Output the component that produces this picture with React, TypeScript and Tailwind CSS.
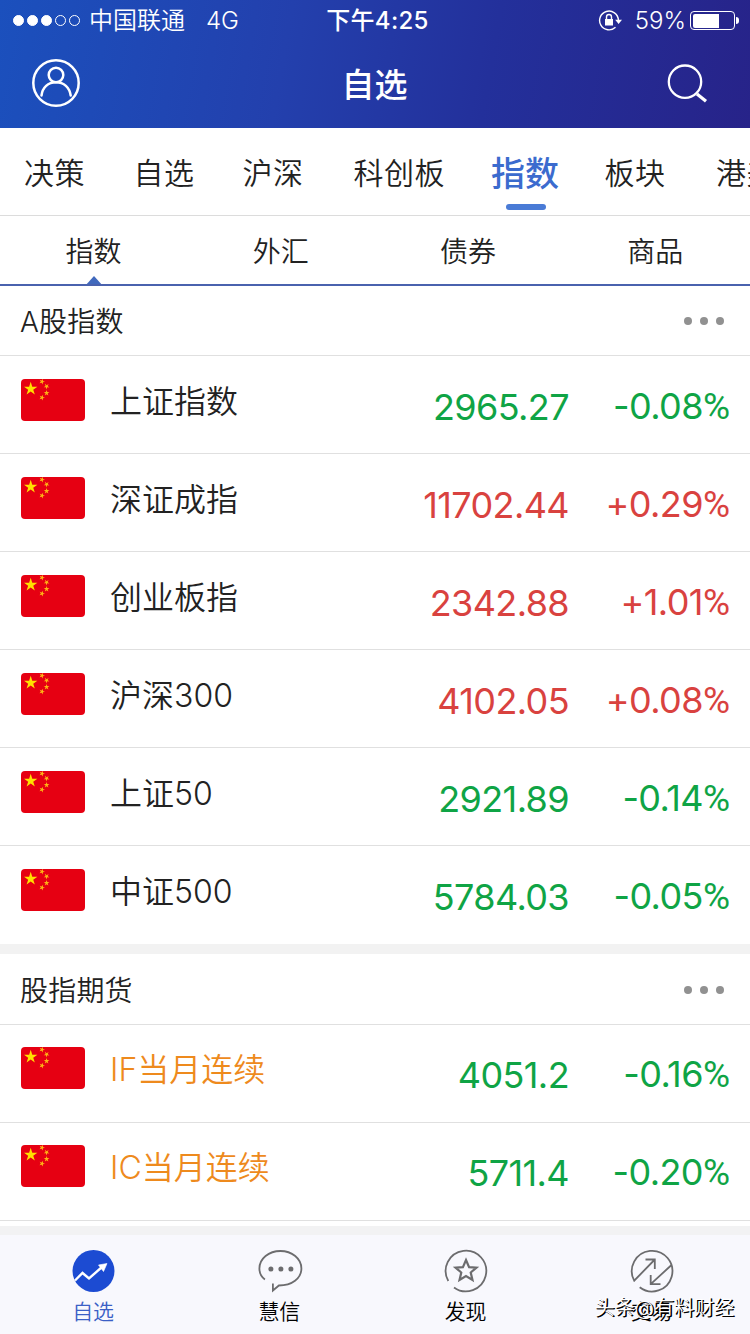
import React from "react";

type Quote = { name: string; price: string; change: string; accent?: boolean };

const aShares: Quote[] = [
  { name: "上证指数", price: "2965.27", change: "-0.08%" },
  { name: "深证成指", price: "11702.44", change: "+0.29%" },
  { name: "创业板指", price: "2342.88", change: "+1.01%" },
  { name: "沪深300", price: "4102.05", change: "+0.08%" },
  { name: "上证50", price: "2921.89", change: "-0.14%" },
  { name: "中证500", price: "5784.03", change: "-0.05%" },
];

const futures: Quote[] = [
  { name: "IF当月连续", price: "4051.2", change: "-0.16%", accent: true },
  { name: "IC当月连续", price: "5711.4", change: "-0.20%", accent: true },
];

const STAR = "M0-1 .2245-.309 .951-.309 .3633.118 .5878.809 0 .382-.5878.809-.3633.118-.951-.309-.2245-.309Z";

function Flag() {
  return (
    <svg className="h-[42px] w-16 shrink-0" viewBox="0 0 64 42">
      <rect width="64" height="42" rx="4" fill="#e60012" />
      <path d={STAR} transform="translate(9.7 9.8) scale(7)" fill="#ffe100" />
      <g fill="#fdb515">
        <path d={STAR} transform="translate(21 2.6) rotate(20) scale(3)" />
        <path d={STAR} transform="translate(25.6 7.4) rotate(40) scale(3)" />
        <path d={STAR} transform="translate(25.6 14) scale(3)" />
        <path d={STAR} transform="translate(21 18.6) rotate(20) scale(3)" />
      </g>
    </svg>
  );
}

function Row({ q }: { q: Quote }) {
  const tone = q.change.startsWith("+") ? "text-[#d9423f]" : "text-[#0fa445]";
  return (
    <div className={`flex h-[98px] items-start border-b border-[#e0e0e0] pl-[21px] pr-5 ${q.accent ? "[&>*]:-mt-px" : ""}`}>
      <div className="pt-[23px]">
        <Flag />
      </div>
      <div className={`flex-1 pl-[25px] pt-[22px] text-[32px] leading-[48px] ${q.accent ? "text-[#ee8a1d]" : "text-[#222]"}`}>
        {q.name}
      </div>
      <div className={`pt-[27px] text-right text-[36px] font-[370] leading-[48px] tracking-[-0.6px] ${tone}`}>{q.price}</div>
      <div className={`w-[161px] pt-[26px] text-right text-[36px] font-[370] leading-[48px] tracking-[-0.6px] ${tone}`}>
        {q.change.slice(0, -1)}
        <span className="font-['Roboto'] text-[37px] font-normal tracking-normal">%</span>
      </div>
    </div>
  );
}

function Section({ title, rows }: { title: string; rows: Quote[] }) {
  return (
    <section className="first:[&>div:last-child]:border-transparent">
      <div className="flex h-[70px] items-center justify-between border-b border-[#e0e0e0] pl-5 pr-[26px]">
        <h2 className="pt-0.5 text-[28px] leading-10 tracking-[0.2px] text-[#222]">{title}</h2>
        <div className="flex gap-2">
          <i className="size-2 rounded-full bg-[#919191]" />
          <i className="size-2 rounded-full bg-[#919191]" />
          <i className="size-2 rounded-full bg-[#919191]" />
        </div>
      </div>
      {rows.map((q) => (
        <Row key={q.name} q={q} />
      ))}
    </section>
  );
}

function TrendIcon() {
  return (
    <svg className="size-11" viewBox="0 0 44 44" fill="none">
      <circle cx="22.500" cy="22" r="21" fill="#1c4bd2" />
      <path d="M4 31.500 11.500 24 18 29.500 31 18" stroke="#fff" strokeWidth="2.400" />
      <path d="M36 14.500 27.500 16 32.500 22.500Z" fill="#fff" stroke="#fff" strokeWidth=".6" />
    </svg>
  );
}

function ChatIcon() {
  return (
    <svg className="size-11 overflow-visible" viewBox="0 0 44 44" fill="none">
      <g transform="translate(.9 0)">
        <path d="M7 30.500C3 27.500 1.500 23.500 1.500 19.500 1.500 9.500 11 2 22.500 2S43.500 9.500 43.500 19.500 34 36.500 21 36.500L15 41.500V34.500" stroke="#6c6c6e" strokeWidth="1.800" />
        <g fill="#6c6c6e">
          <circle cx="13" cy="20" r="2.500" />
          <circle cx="23" cy="20" r="2.500" />
          <circle cx="33" cy="20" r="2.500" />
        </g>
      </g>
    </svg>
  );
}

function StarIcon() {
  return (
    <svg className="size-11" viewBox="0 0 44 44" fill="none" stroke="#6c6c6e">
      <path d="M4.300 32A20.300 20.300 0 1 1 10 38.400" strokeWidth="1.800" />
      <path d="M0-1 .28-.35 .951-.309 .43.14 .5878.809 0 .45-.5878.809-.43.14-.951-.309-.28-.35Z" transform="translate(22 22) scale(11)" strokeWidth=".2" />
    </svg>
  );
}

function TradeIcon() {
  return (
    <svg className="size-11" viewBox="0 0 44 44" fill="none" stroke="#6c6c6e" strokeWidth="1.800">
      <path d="M15.500 10.500H24.800V20M24.800 10.500 4.200 31.700A20.300 20.300 0 1 1 9.700 38.200" />
      <path d="M41.500 16 20.700 35.200M20.700 26V35.200H30.500" />
    </svg>
  );
}

export default function App() {
  const dot = "size-[11px] rounded-full border border-white";
  return (
    <div className="flex h-[1334px] w-[750px] flex-col overflow-hidden bg-white font-['Inter','Noto_Sans_CJK_SC',sans-serif] font-[350]">
      <header className="h-32 bg-[linear-gradient(100deg,#1b50bd_0%,#2340ad_38%,#23309b_65%,#272389_100%)] text-white">
        <div className="grid h-[41px] grid-cols-[1fr_auto_1fr] items-center pl-[13px] pr-[11px] text-2xl leading-8">
          <div className="flex items-center">
            <div className="flex gap-[3px]">
              <i className={`${dot} bg-white`} />
              <i className={`${dot} bg-white`} />
              <i className={`${dot} bg-white`} />
              <i className={dot} />
              <i className={dot} />
            </div>
            <span className="ml-[9px] pt-px">中国联通</span>
            <span className="ml-[21px] pt-px">4G</span>
          </div>
          <div className="pl-[3px] pt-px font-medium tracking-[0.3px]">下午4:25</div>
          <div className="flex items-center justify-end">
            <svg className="mr-[13px] h-6 w-6" viewBox="0 0 24 24" fill="none" stroke="#fff" strokeWidth="1.400">
              <path d="M17.500 18.300A9.400 9.400 0 1 1 20.400 11" />
              <path d="M17.200 10.800H24L20.600 15Z" fill="#fff" stroke="none" />
              <rect x="7" y="10" width="8" height="6.500" fill="#fff" stroke="none" />
              <path d="M8.500 10.500V8a2.500 2.500 0 0 1 5 0V10.500" />
            </svg>
            <span className="pt-px">59%</span>
            <div className="ml-1 h-[19px] w-[45px] rounded-[4px] border border-white p-[1.5px]">
              <div className="h-full w-[26px] rounded-l-[2px] bg-white" />
            </div>
            <i className="ml-px h-[7px] w-[3px] rounded-r-full bg-white" />
          </div>
        </div>
        <div className="grid h-[84px] grid-cols-3 items-center pl-8 pr-[42px]">
          <svg className="size-12" viewBox="0 0 48 48" fill="none" stroke="#fff" strokeWidth="2.500">
            <circle cx="24" cy="24" r="22.700" />
            <circle cx="24" cy="16" r="7.300" />
            <path d="M9.500 36.500C10.500 28.500 16 23.300 24 23.300S37.500 28.500 38.700 36.500" strokeLinecap="round" />
          </svg>
          <h1 className="pl-[9px] pt-1 text-center text-[33px] font-medium leading-10">自选</h1>
          <svg className="h-10 w-[42px] justify-self-end" viewBox="0 0 42 40" fill="none" stroke="#fff">
            <circle cx="19" cy="18.700" r="16.200" strokeWidth="2.300" />
            <path d="M31 31 40 38.300" strokeWidth="3.300" />
          </svg>
        </div>
      </header>

      <nav className="flex h-[88px] items-start overflow-hidden whitespace-nowrap border-b border-[#dcdcdc] pl-6 pt-[25px] text-[30px] leading-10 tracking-[0.5px] text-[#222]">
        <span className="w-[109.5px] shrink-0">决策</span>
        <span className="w-[109px] shrink-0">自选</span>
        <span className="w-[111px] shrink-0">沪深</span>
        <span className="w-[137.5px] shrink-0">科创板</span>
        <div className="flex w-[113.5px] shrink-0 flex-col pt-px text-[34px] font-medium leading-10 tracking-normal text-[#3b6bce]">
          指数
          <i className="ml-[15px] mt-[10px] h-[6px] w-10 rounded-full bg-[#4a7bd6]" />
        </div>
        <span className="w-[111.5px] shrink-0">板块</span>
        <span className="shrink-0">港美</span>
      </nav>

      <nav className="grid h-[70px] grid-cols-4 border-b-2 border-[#4a62ae] pr-px pt-4 text-center text-[28px] leading-10 text-[#222]">
        <div className="flex flex-col items-center">
          指数
          <svg className="mt-1 h-2 w-4" viewBox="0 0 16 8">
            <path d="M.8 8 8 0 15.200 8Z" fill="#4169bd" />
          </svg>
        </div>
        <div>外汇</div>
        <div>债券</div>
        <div>商品</div>
      </nav>

      <main className="h-[940px] shrink-0">
        <Section title="A股指数" rows={aShares} />
        <div className="mb-px h-[10px] bg-[#f2f2f2]" />
        <Section title="股指期货" rows={futures} />
      </main>

      <footer className="relative grid h-[108px] shrink-0 grid-cols-4 border-t-[9px] border-[#f2f2f3] bg-[#f8f8fd] pr-[5px] pt-[14px] text-[21px] leading-8 text-black">
        <div className="flex flex-col items-center gap-[3px] text-[#3b5fc6]">
          <TrendIcon />
          自选
        </div>
        <div className="flex flex-col items-center gap-[3px]">
          <ChatIcon />
          慧信
        </div>
        <div className="flex flex-col items-center gap-[3px]">
          <StarIcon />
          发现
        </div>
        <div className="flex flex-col items-center gap-[3px]">
          <TradeIcon />
          交易
        </div>
        <div className="absolute right-4 top-[57px] whitespace-nowrap text-[20px] leading-8 text-white [text-shadow:1px_1px_0_#000,1.5px_1px_0_#000]">
          头条@有料财经
        </div>
      </footer>
    </div>
  );
}
